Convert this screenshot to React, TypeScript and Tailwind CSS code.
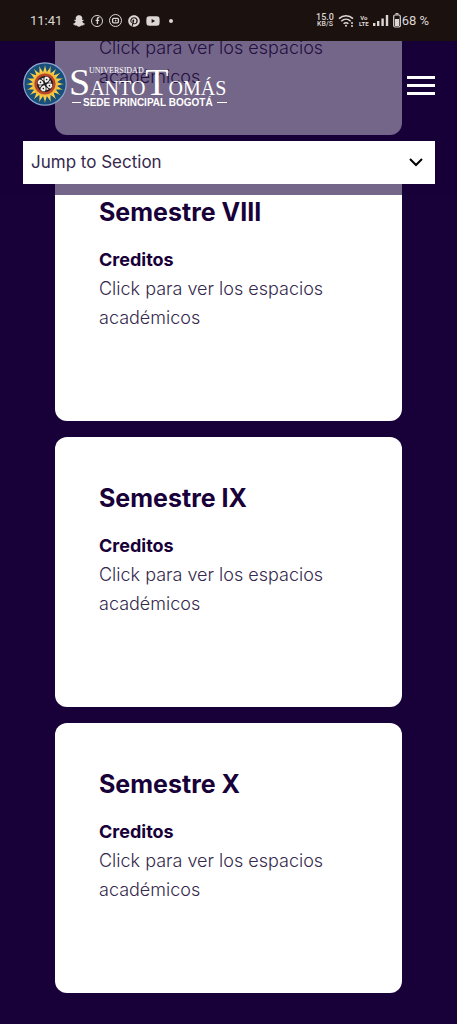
import { useState } from "react";
import { FaFacebookF, FaPinterest, FaSnapchatGhost, FaYoutube } from "react-icons/fa";

const semesters = ["Semestre VIII", "Semestre IX", "Semestre X"];

const rays = Array.from({ length: 20 }, (_, i) => i * 18);

function StatusBar() {
  return (
    <div className="relative z-20 flex h-[41px] items-center justify-between bg-[#1b1210] pr-7 pl-[30px] font-['Roboto',sans-serif] text-[#dcd6d4]">
      <div className="flex items-center">
        <span className="text-[13px]">11:41</span>
        <div className="ml-[11px] flex items-center gap-[6px]">
          <FaSnapchatGhost size={12} />
          <span className="flex size-3 items-center justify-center rounded-full border border-current">
            <FaFacebookF size={7} />
          </span>
          <svg width="13" height="13" viewBox="0 0 13 13" fill="none" stroke="currentColor">
            <circle cx="6.5" cy="6.5" r="6" />
            <rect x="3.6" y="4.4" width="5.8" height="4.4" rx="1" strokeWidth="1.3" />
            <path d="M6 5.4v2.4l1.8-1.2z" fill="currentColor" stroke="none" />
          </svg>
          <FaPinterest size={12} />
          <FaYoutube size={14} />
          <span className="ml-[3px] size-1 rounded-full bg-current" />
        </div>
      </div>
      <div className="flex items-center">
        <div className="flex flex-col items-center font-medium">
          <span className="text-[9px] leading-[8px]">15.0</span>
          <span className="text-[7px] leading-[7px]">KB/S</span>
        </div>
        <svg className="ml-1" width="17" height="14" viewBox="0 0 17 14" fill="none" stroke="currentColor" strokeWidth="1.5">
          <path d="M1 4.6c4-3.8 10-3.8 14 0M3.3 7.2c2.8-2.6 6.6-2.6 9.4 0M5.6 9.7c1.5-1.3 3.3-1.3 4.8 0" />
          <circle cx="8" cy="11.8" r="1" fill="currentColor" stroke="none" />
          <path d="M14 8v2M14 11v2" />
        </svg>
        <div className="ml-1 flex flex-col items-center text-[6px] leading-[6px] font-bold">
          <span>Vo</span>
          <span>LTE</span>
        </div>
        <svg className="ml-1" width="16" height="12" viewBox="0 0 16 12" fill="currentColor">
          <rect x="0" y="8" width="2.4" height="3" />
          <rect x="4" y="6" width="2.4" height="5" />
          <rect x="8.4" y="3.5" width="2.4" height="7.5" />
          <rect x="12.8" y="0" width="2.4" height="11" />
        </svg>
        <svg className="ml-1" width="8" height="15" viewBox="0 0 8 15" fill="none" stroke="currentColor">
          <path d="M2.5.8h3" strokeWidth="1.4" />
          <rect x=".7" y="2" width="6.6" height="12" rx="1.4" strokeWidth="1.2" />
          <rect x="2" y="6" width="4" height="7" fill="currentColor" stroke="none" />
        </svg>
        <span className="ml-px text-[13px]">68 %</span>
      </div>
    </div>
  );
}

function Logo() {
  return (
    <svg width="206" height="46" viewBox="0 0 206 46" role="img" aria-label="Universidad Santo Tomás">
      <circle cx="22" cy="22" r="21.2" fill="#17507c" stroke="#8fa6cf" strokeWidth="1.2" />
      {rays.map((angle) => (
        <path
          key={angle}
          d="M19.9 11.5C20.4 8 21.6 6.6 22 3 22.4 6.6 23.6 8 24.1 11.5Z"
          fill="#f6cf45"
          transform={`rotate(${angle} 22 22)`}
        />
      ))}
      <circle cx="22" cy="22" r="12.6" fill="#f2bd3c" />
      <circle cx="22" cy="22" r="10.6" fill="#b8452a" />
      <circle cx="22" cy="22" r="8" fill="#1c1a20" />
      {[20, 110, 200, 290].map((angle) => (
        <g key={angle} transform={`rotate(${angle} 22 22)`} fill="#f5f2ee">
          <path d="M22 20.6C20 19.4 19 17.2 19.6 15.2L22 14.3 24.4 15.2C25 17.2 24 19.4 22 20.6Z" />
          <path d="M24.6 19.6 25.6 16.6 27.4 18.4Z" />
          <circle cx="22" cy="17.2" r=".8" fill="#1c1a20" />
        </g>
      ))}
      <g fill="#fff" fontFamily="Liberation Serif, serif">
        <text x="66" y="11" fontSize="8">
          UNIVERSIDAD
        </text>
        <text x="46" y="33" fontSize="20">
          <tspan fontSize="38">S</tspan>ANTO<tspan fontSize="38">T</tspan>OMÁS
        </text>
      </g>
      <text x="60" y="44" fill="#fff" fontFamily="Liberation Sans, sans-serif" fontSize="10" fontWeight="700">
        SEDE PRINCIPAL BOGOTÁ
      </text>
      <path d="M49 40.5h9M194 40.5h10" stroke="#fff" strokeWidth="1" />
    </svg>
  );
}

function Header() {
  const [section, setSection] = useState("");

  return (
    <header className="absolute inset-x-0 top-[41px] z-10 bg-[#180039]/60 pt-[21px] pr-[22px] pb-[11px] pl-[23px]">
      <div className="flex items-center justify-between">
        <a href="#inicio">
          <Logo />
        </a>
        <button type="button" aria-label="Menú" className="flex w-7 flex-col gap-[5px]">
          <span className="h-[3px] w-full bg-white" />
          <span className="h-[3px] w-full bg-white" />
          <span className="h-[3px] w-full bg-white" />
        </button>
      </div>
      <div className="relative mt-[33px] flex">
        <select
          aria-label="Jump to Section"
          value={section}
          onChange={(e) => setSection(e.target.value)}
          className="h-[43px] w-full appearance-none bg-white px-2 text-[17px] text-[#35294d]"
        >
          <option value="">Jump to Section</option>
        </select>
        <svg
          className="pointer-events-none absolute top-4 right-3 text-black"
          width="14"
          height="10"
          viewBox="0 0 14 10"
          fill="none"
          stroke="currentColor"
          strokeWidth="2"
        >
          <path d="M1 2 7 8 13 2" />
        </svg>
      </div>
    </header>
  );
}

function SemesterCard({ title }: { title: string }) {
  return (
    <article className="min-h-[270px] rounded-xl bg-white px-11 pt-[46px] pb-11">
      <h2 className="text-[25px] leading-[30px] font-bold text-[#180039]">{title}</h2>
      <h3 className="mt-[18px] font-bold text-[#180039]">Creditos</h3>
      <p className="font-light text-[#35294d]">Click para ver los espacios académicos</p>
    </article>
  );
}

export default function App() {
  return (
    <div className="relative min-h-screen overflow-hidden bg-[#180039] font-['Inter',sans-serif]">
      <StatusBar />
      <Header />
      <main className="-mt-2 flex flex-col gap-4 px-[55px] pb-8 text-[18px] leading-[29px]">
        <article className="rounded-b-xl bg-white px-11 pb-11">
          <p className="font-light text-[#35294d]">Click para ver los espacios académicos</p>
        </article>
        {semesters.map((title) => (
          <SemesterCard key={title} title={title} />
        ))}
      </main>
    </div>
  );
}
